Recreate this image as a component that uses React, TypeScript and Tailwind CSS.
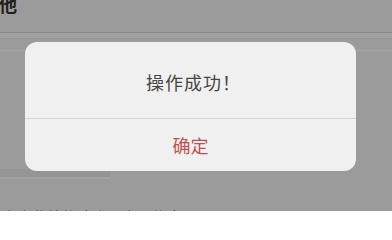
export default function App() {
  return (
    <div className="relative w-[392px] h-[211px] overflow-hidden bg-[#9b9b9b] font-['Noto_Sans_CJK_SC',_sans-serif]">
      {/* Page behind the mask */}
      <div className="flex flex-col">
        <div className="h-[32px] overflow-hidden">
          <div className="-ml-[19px] -mt-[8px] text-[18px] leading-[24px] font-bold text-[#1f1f1f]">
            其他
          </div>
        </div>
        <div className="h-px bg-[#868686]" />
        <div className="h-[6px] bg-[#a0a0a0] border-b border-[#929292]" />
        <div className="h-[11px]" />
        <div className="h-px bg-[#a2a2a2]" />
        <div className="h-[118px]" />
        <div className="w-[110px] h-[10px] bg-[#959595] border-b-2 border-[#a3a3a3]" />
        <div className="h-[28px]" />
        <div className="pl-[2px] text-[15px] leading-[20px] text-[#8a2f2f] whitespace-nowrap">
          点击此处修改登录密码信息
        </div>
      </div>

      {/* Alert dialog */}
      <div className="absolute left-[25px] top-[42px] w-[331px] rounded-[12px] bg-[#f0f0f0] flex flex-col">
        <div className="h-[76px] flex items-center justify-center pt-[4px] pl-[6px] text-[18px] tracking-[1px] text-[#454545]">
          操作成功！
        </div>
        <div className="h-px bg-[#d6d6d6]" />
        <div className="h-[52px] flex items-center justify-center text-[18px] text-[#c0504f]">
          确定
        </div>
      </div>
    </div>
  );
}
